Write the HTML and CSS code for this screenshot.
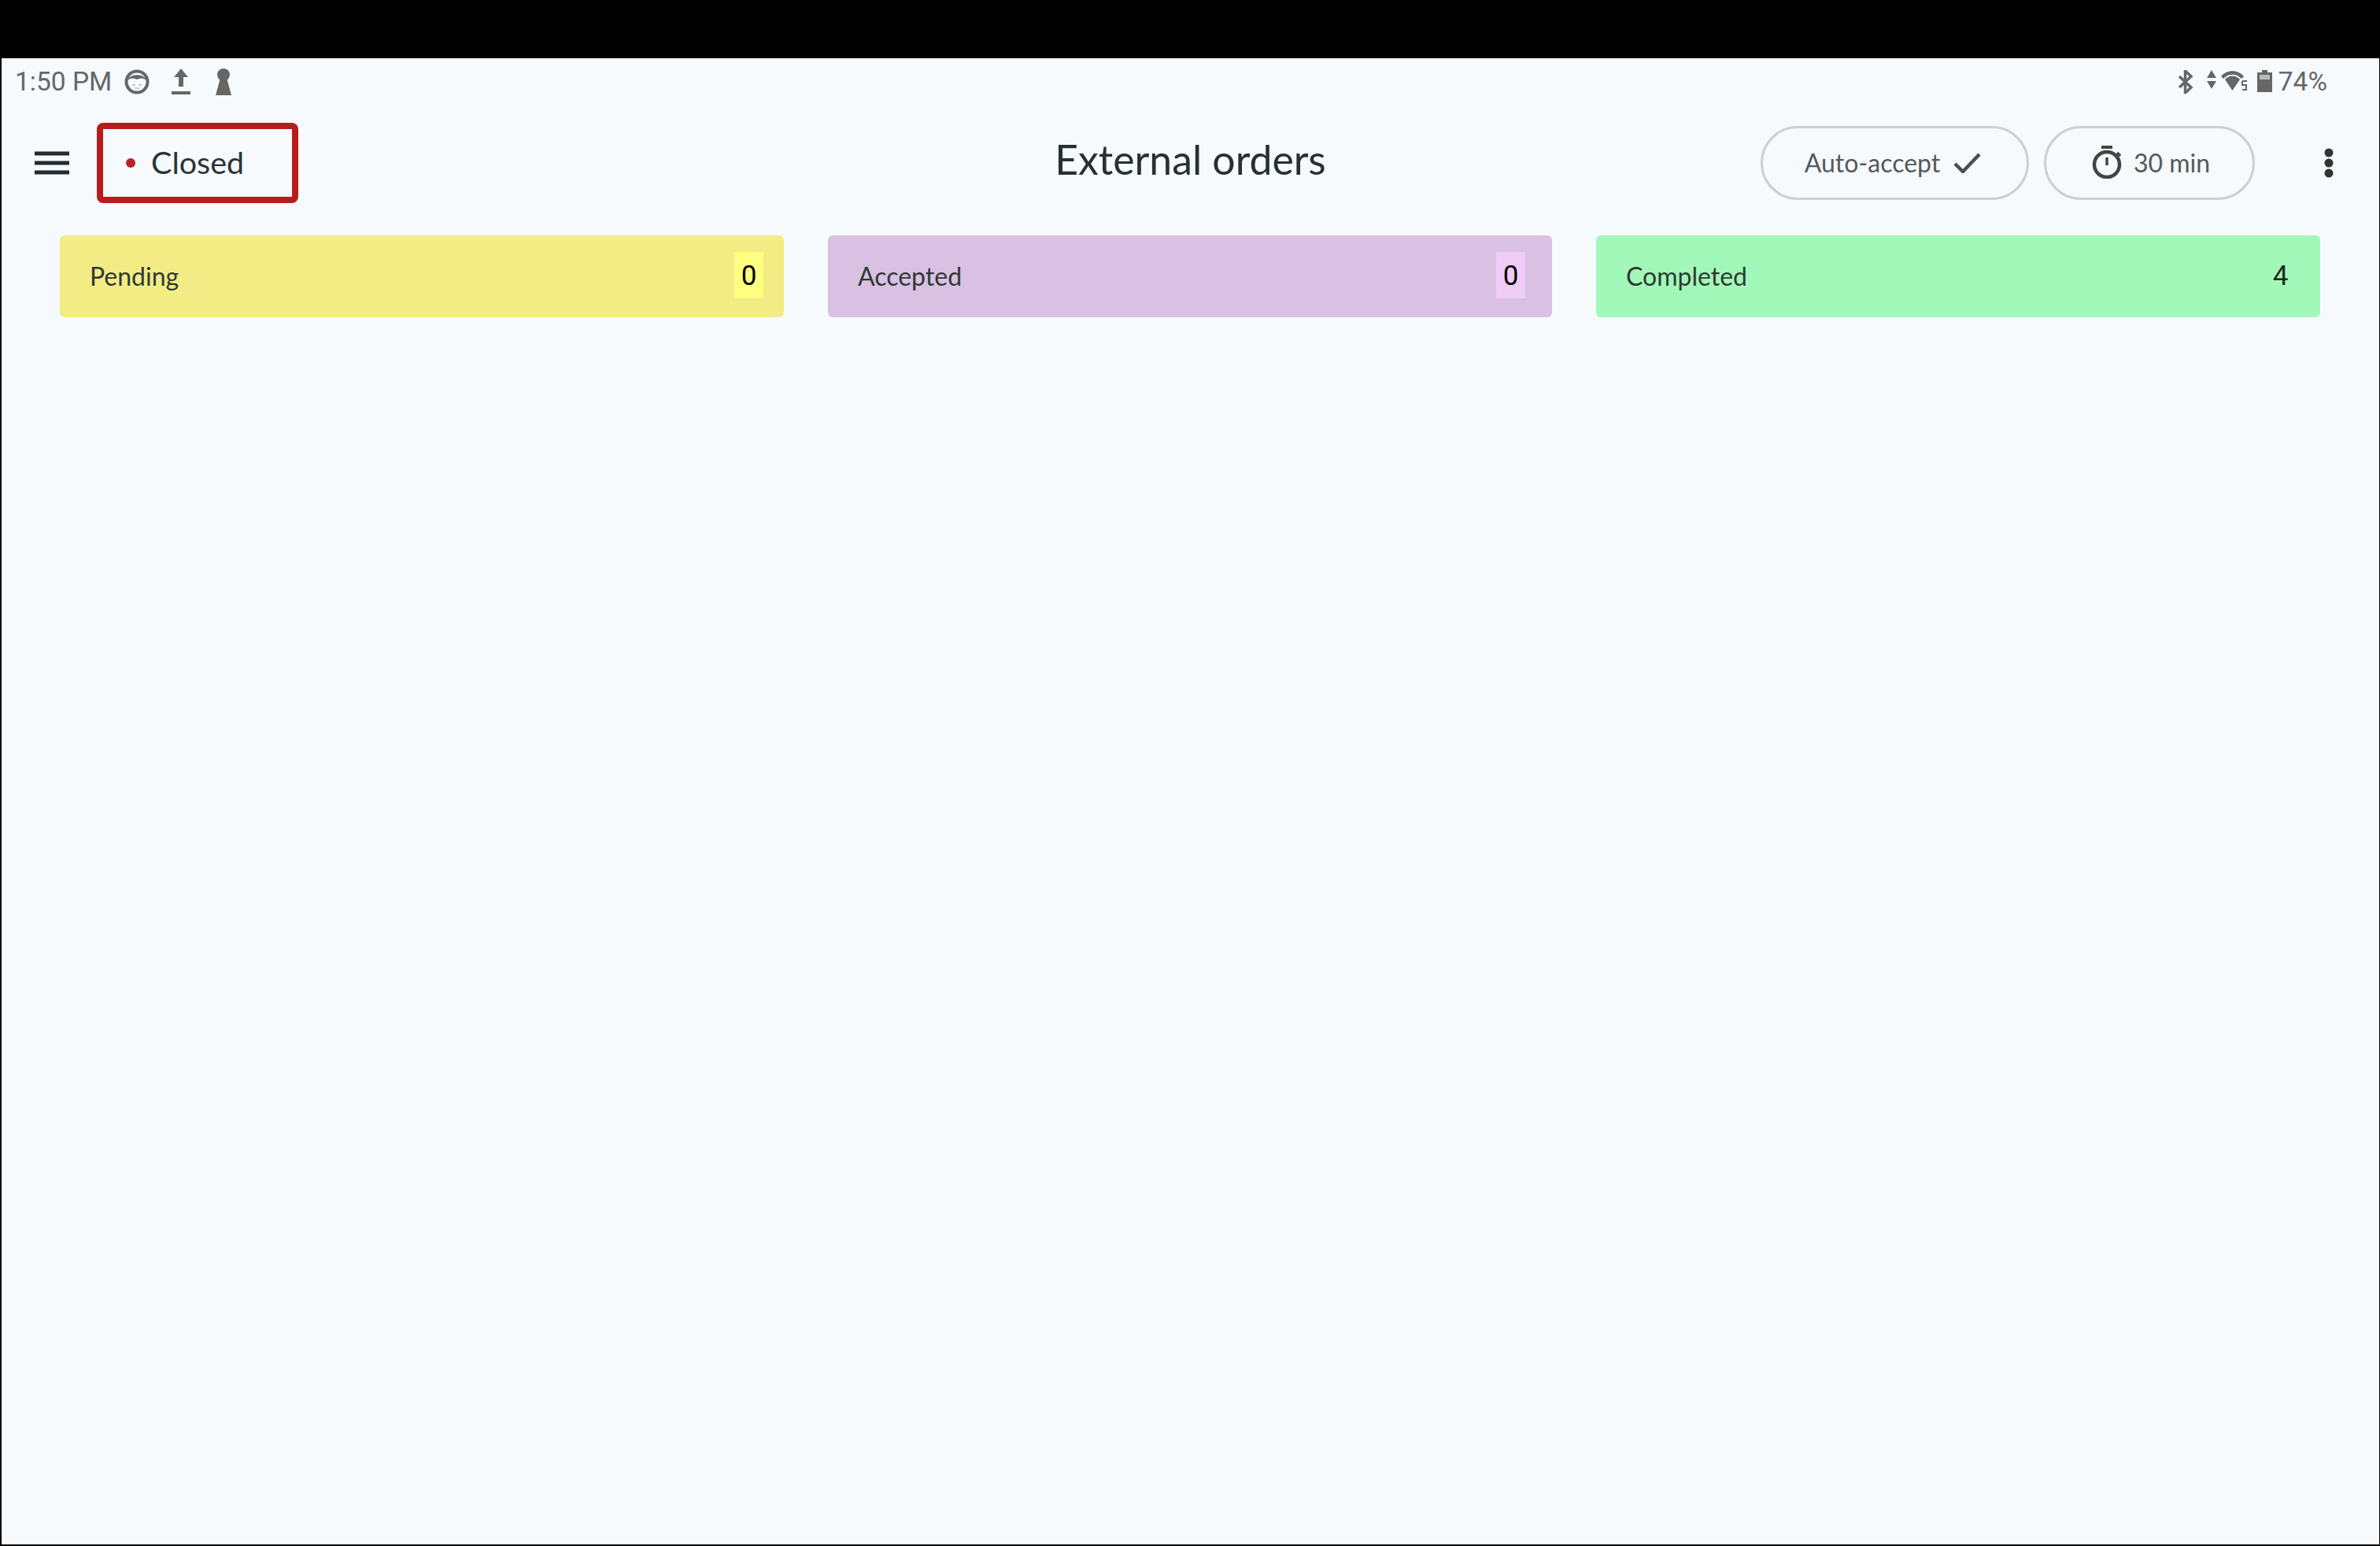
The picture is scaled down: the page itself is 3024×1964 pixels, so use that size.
FILE: index.html
```html
<!DOCTYPE html>
<html lang="en">
<head>
<meta charset="utf-8">
<title>External orders</title>
<link rel="stylesheet" href="styles.css">
</head>
<body>
<div class="topbar"></div>
<main class="screen">
  <div class="status">
    <div class="status-left">
      <span class="clock">1:50 PM</span>
      <svg class="ic-face" viewBox="0 0 32 32"><circle cx="16" cy="16" r="13.5" fill="none" stroke="#666" stroke-width="4"/><path d="M4 14C6 5 26 5 28 14C22 10 19 12 16 13C13 12 10 10 4 14Z" fill="#666"/><path d="M10 20h4M18 20h4M13 24h6" stroke="#bbb" stroke-width="1.5"/></svg>
      <svg class="ic-upload" viewBox="0 0 24 34"><path d="M12 0L21 11H15V23H9V11H3Z" fill="#666"/><rect y="29" width="24" height="4" fill="#666"/></svg>
      <svg class="ic-key" viewBox="0 0 20 34"><circle cx="10" cy="8" r="8" fill="#666"/><path d="M6 12H14L20 34H0Z" fill="#666"/></svg>
    </div>
    <div class="status-right">
      <svg class="ic-bt" viewBox="0 0 20 30"><path d="M2 8L17 22L9.500 29V1L17 8L2 22" fill="none" stroke="#666" stroke-width="3.500"/></svg>
      <svg class="ic-arrows" viewBox="0 0 12 24"><path d="M6 0L12 10H0ZM0 14H12L6 24Z" fill="#666"/></svg>
      <svg class="ic-wifi" viewBox="0 0 34 26"><path d="M0 8C7 -1 22 -1 29 8L26 11C20 4 9 4 3 11Z" fill="#666"/><path d="M5 12C10 6 19 6 24 12L14.500 26Z" fill="#666"/><path d="M27 14H33M27 14V19H32V25H27" fill="none" stroke="#666" stroke-width="2"/></svg>
      <svg class="ic-batt" viewBox="0 0 19 28"><path d="M6 0H13V3H19V28H0V3H6Z" fill="#666"/><rect x="3" y="6" width="13" height="6" fill="#bbb"/></svg>
      <span class="pct">74%</span>
    </div>
  </div>

  <header class="appbar">
    <div class="appbar-left">
      <svg class="ic-menu" viewBox="0 0 44 30"><path d="M0 3H44M0 15H44M0 27H44" stroke="#222b30" stroke-width="5"/></svg>
      <div class="state"><span class="state-dot"></span><span class="state-label">Closed</span></div>
    </div>
    <h1 class="title">External orders</h1>
    <div class="appbar-right">
      <button class="pill pill-auto">Auto-accept
        <svg class="ic-check" viewBox="0 0 35 26"><path d="M2 14L12 24L33 2" fill="none" stroke="#4a4f52" stroke-width="4.500"/></svg>
      </button>
      <button class="pill pill-time">
        <svg class="ic-timer" viewBox="0 0 38 42"><path d="M12 2H26" stroke="#444" stroke-width="4"/><circle cx="19" cy="24" r="16" fill="none" stroke="#444" stroke-width="4.500"/><path d="M19 15V25M32 9L36 13" stroke="#444" stroke-width="3.500"/></svg>
        30 min
      </button>
      <svg class="ic-more" viewBox="0 0 12 38"><circle cx="6" cy="6" r="5.500" fill="#333"/><circle cx="6" cy="19" r="5.500" fill="#333"/><circle cx="6" cy="32" r="5.500" fill="#333"/></svg>
    </div>
  </header>

  <section class="columns">
    <div class="col col-pending"><span class="col-name">Pending</span><span class="count">0</span></div>
    <div class="col col-accepted"><span class="col-name">Accepted</span><span class="count">0</span></div>
    <div class="col col-completed"><span class="col-name">Completed</span><span class="count">4</span></div>
  </section>
</main>
</body>
</html>
```
FILE: styles.css
```css
* { box-sizing: border-box; }
html, body { margin: 0; height: 100%; background: #000; }
body { display: flex; flex-direction: column; width: 3024px; height: 1964px; overflow: hidden; }
svg { display: block; flex: none; }

.topbar { height: 74px; flex: none; background: #000; }
.screen { flex: 1; margin: 0 1px 2px 2px; background: #f6fafd; }

.status { height: 60px; display: flex; justify-content: space-between; align-items: center; padding: 0 66px 0 17px; font: 33.5px/1 Roboto, sans-serif; color: #666; }
.status-left, .status-right { display: flex; align-items: center; }
.ic-face { width: 32px; height: 32px; margin-left: 16px; }
.ic-upload { width: 24px; height: 34px; margin-left: 28px; }
.ic-key { width: 20px; height: 34px; margin-left: 32px; }
.ic-bt { width: 20px; height: 30px; }
.ic-arrows { width: 12px; height: 24px; margin: -6px 0 0 17px; }
.ic-wifi { width: 34px; height: 26px; margin: -4px 0 0 6px; }
.ic-batt { width: 19px; height: 28px; margin: -2px 0 0 12px; }
.pct { margin-left: 8px; }

.appbar { height: 102px; margin-top: 22px; display: grid; grid-template-columns: 1fr auto 1fr; align-items: center; }
.appbar-left { display: flex; align-items: center; padding-left: 42px; }
.ic-menu { width: 44px; height: 30px; }
.state { width: 256px; height: 102px; margin-left: 35px; border: 8px solid #b71c1c; border-radius: 8px; display: flex; align-items: center; padding-left: 29px; }
.state-dot { width: 12px; height: 12px; border-radius: 50%; background: #b72525; }
.state-label { margin: 0 0 2px 20px; font: 39.5px/1 Lato, sans-serif; color: #2b3337; }
.title { margin: 0 0 8px; font: 400 51.7px/1 Lato, sans-serif; color: #263035; }
.appbar-right { display: flex; align-items: center; justify-content: flex-end; padding-right: 58px; }
.pill { height: 94px; background: none; border: 3px solid #cdcfd1; border-radius: 47px; display: flex; align-items: center; justify-content: center; font: 32px/1 Lato, sans-serif; color: #54595c; padding: 0; }
.pill-auto { width: 341px; gap: 17px; padding-right: 5px; }
.pill-time { width: 268px; margin-left: 19px; gap: 15px; padding-left: 4px; }
.ic-check { width: 35px; height: 26px; }
.ic-timer { width: 38px; height: 42px; margin-top: -3px; }
.ic-more { width: 12px; height: 38px; margin-left: 88px; }

.columns { display: grid; grid-template-columns: repeat(3, 920px); gap: 56px; padding: 41px 0 0 74px; }
.col { height: 104px; border-radius: 6px; display: flex; justify-content: space-between; align-items: center; padding: 0 26px 0 38px; font: 32px/1 Lato, sans-serif; color: #2e3a33; }
.col-pending { background: #f3ec85; }
.col-accepted { background: #dac0e3; padding-right: 34px; }
.col-completed { background: #a2f8b9; padding-right: 32px; }
.count { min-width: 37px; height: 59px; margin-top: -3px; padding-top: 2px; display: flex; align-items: center; justify-content: center; font: 400 35px/1 Roboto, sans-serif; color: #000; }
.col-pending .count { background: #ffff80; }
.col-accepted .count { background: #eeccf6; }
.col-completed .count { color: #1c2a20; }
```
